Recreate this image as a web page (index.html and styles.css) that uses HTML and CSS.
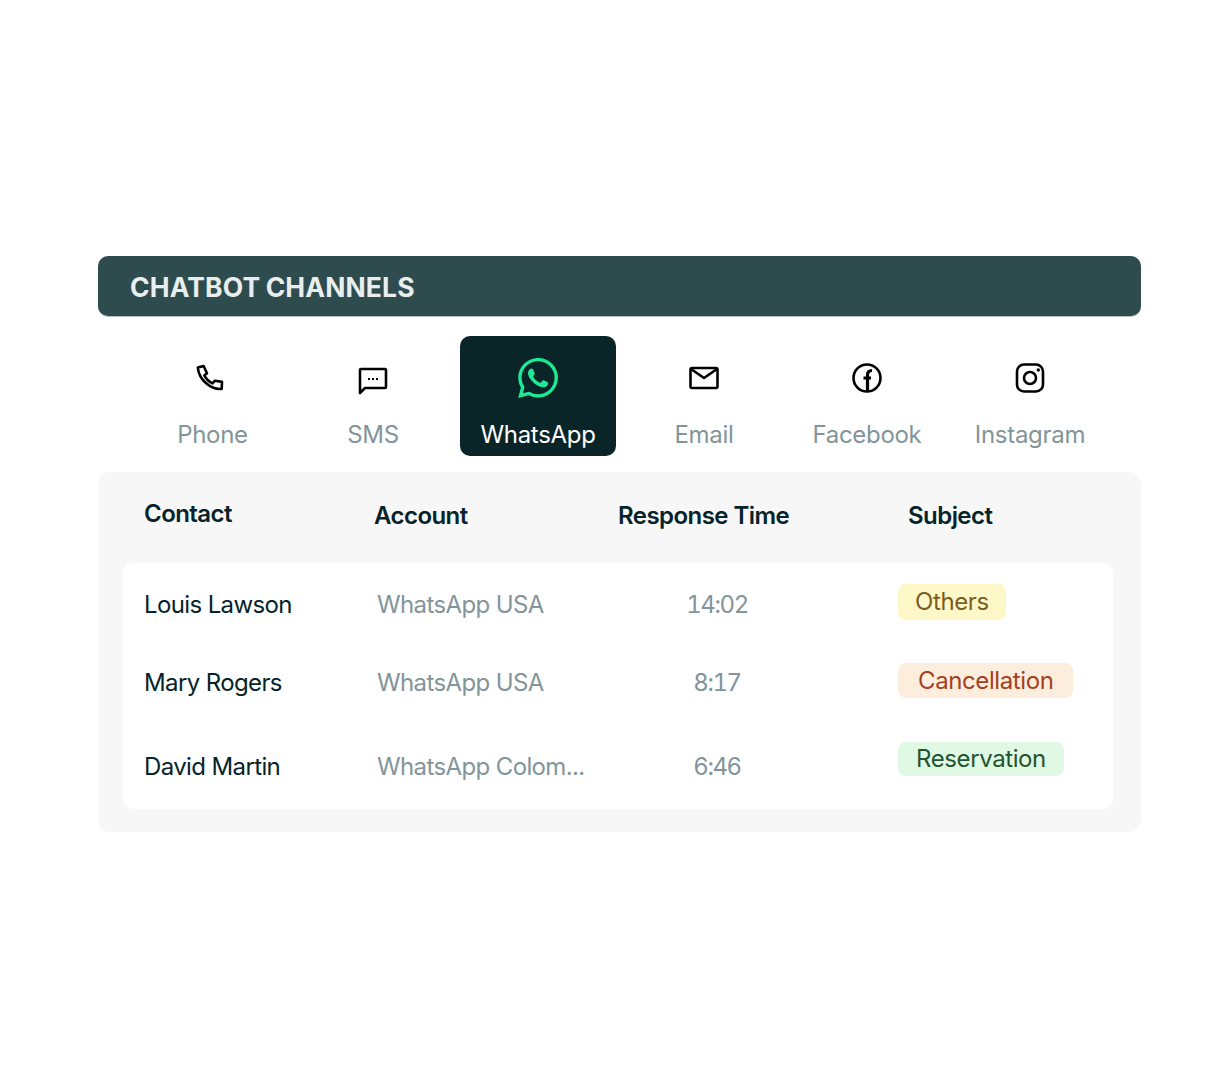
FILE: index.html
```html
<!DOCTYPE html>
<html lang="en">
<head>
    <meta charset="UTF-8">
    <title>Chatbot channels</title>
    <link rel="stylesheet" href="styles.css">
</head>
<body>
<main class="widget">
    <h1 class="banner">CHATBOT CHANNELS</h1>

    <nav class="channels">
        <div class="channel">
            <svg class="channel-icon" width="40" height="40" viewBox="0 0 40 40">
                <path class="line" d="M4.800 9.600 10.600 8l3.400 7.200-2.700 2.200c1.900 3.700 4.500 6.200 8.200 8l2.500-2.700 7 1.200-.3 7C18 32 6 22 4.800 9.600Z"/>
            </svg>
            <span>Phone</span>
        </div>
        <div class="channel">
            <svg class="channel-icon" width="40" height="40" viewBox="0 0 40 40">
                <path class="line" d="M7 35V12c0-.6.4-1 1-1h24c.6 0 1 .4 1 1v17c0 .6-.4 1-1 1H12l-5 5Z"/>
                <path class="dots" d="M15 21h2M19 21h2M23 21h2"/>
            </svg>
            <span>SMS</span>
        </div>
        <div class="channel channel-active">
            <svg class="channel-icon" width="40" height="40" viewBox="0 0 24 24">
                <path class="whatsapp" d="M17.472 14.382c-.297-.149-1.758-.867-2.03-.967-.273-.099-.471-.148-.67.15-.197.297-.767.966-.94 1.164-.173.199-.347.223-.644.075-.297-.15-1.255-.463-2.39-1.475-.883-.788-1.48-1.761-1.653-2.059-.173-.297-.018-.458.13-.606.134-.133.298-.347.446-.52.149-.174.198-.298.298-.497.099-.198.05-.371-.025-.52-.075-.149-.669-1.612-.916-2.207-.242-.579-.487-.5-.669-.51-.173-.008-.371-.01-.57-.01-.198 0-.52.074-.792.372-.272.297-1.04 1.016-1.04 2.479 0 1.462 1.065 2.875 1.213 3.074.149.198 2.096 3.2 5.077 4.487.709.306 1.262.489 1.694.625.712.227 1.36.195 1.871.118.571-.085 1.758-.719 2.006-1.413.248-.694.248-1.289.173-1.413-.074-.124-.272-.198-.57-.347m-5.421 7.403h-.004a9.87 9.87 0 01-5.031-1.378l-.361-.214-3.741.982.998-3.648-.235-.374a9.86 9.86 0 01-1.51-5.26c.001-5.45 4.436-9.884 9.888-9.884 2.64 0 5.122 1.03 6.988 2.898a9.825 9.825 0 012.893 6.994c-.003 5.45-4.437 9.884-9.885 9.884m8.413-18.297A11.815 11.815 0 0012.05 0C5.495 0 .16 5.335.157 11.892c0 2.096.547 4.142 1.588 5.945L.057 24l6.305-1.654a11.882 11.882 0 005.683 1.448h.005c6.554 0 11.89-5.335 11.893-11.893a11.821 11.821 0 00-3.48-8.413z"/>
            </svg>
            <span>WhatsApp</span>
        </div>
        <div class="channel">
            <svg class="channel-icon" width="40" height="40" viewBox="0 0 40 40">
                <rect class="line" x="6.500" y="10" width="27" height="20" rx="1.500"/>
                <path class="line" d="m7 11 13 9 13-9"/>
            </svg>
            <span>Email</span>
        </div>
        <div class="channel">
            <svg class="channel-icon" width="40" height="40" viewBox="0 0 40 40">
                <circle class="line" cx="20" cy="20" r="13.500"/>
                <path class="fb" d="M20.500 33V17c0-3 1.300-4.500 4.500-4.500M16.500 20h7.500"/>
            </svg>
            <span>Facebook</span>
        </div>
        <div class="channel">
            <svg class="channel-icon" width="40" height="40" viewBox="0 0 40 40">
                <rect class="line" x="7" y="6.500" width="26" height="27" rx="7"/>
                <circle class="line" cx="20" cy="20" r="6"/>
                <circle cx="28.300" cy="12" r="1.700"/>
            </svg>
            <span>Instagram</span>
        </div>
    </nav>

    <section class="table-panel">
        <div class="table-head">
            <div class="head-contact">Contact</div>
            <div>Account</div>
            <div>Response Time</div>
            <div>Subject</div>
        </div>
        <div class="table-card">
            <div class="row">
                <div class="cell cell-name">Louis Lawson</div>
                <div class="cell cell-muted">WhatsApp USA</div>
                <div class="cell cell-muted cell-time">14:02</div>
                <div><span class="badge badge-others">Others</span></div>
            </div>
            <div class="row">
                <div class="cell cell-name">Mary Rogers</div>
                <div class="cell cell-muted">WhatsApp USA</div>
                <div class="cell cell-muted cell-time">8:17</div>
                <div><span class="badge badge-cancel">Cancellation</span></div>
            </div>
            <div class="row row-last">
                <div class="cell cell-name">David Martin</div>
                <div class="cell cell-muted">WhatsApp Colom...</div>
                <div class="cell cell-muted cell-time">6:46</div>
                <div><span class="badge badge-reserve">Reservation</span></div>
            </div>
        </div>
    </section>
</main>
</body>
</html>
```

FILE: styles.css
```css
html, body {
    margin: 0;
    background: #fff;
    font-family: Inter, "Liberation Sans", sans-serif;
    color: #06232a;
}

.widget {
    width: 1043px;
    padding: 256px 0 256px 98px;
}

.banner {
    margin: 0;
    height: 60px;
    padding-left: 32px;
    border-radius: 10px;
    background: #2e4b4d;
    box-shadow: 0 1px 0 #b4c3c3;
    color: #e8eeee;
    font-size: 26.500px;
    font-weight: 700;
    letter-spacing: .13px;
    word-spacing: -1px;
    line-height: 62px;
}

.channels {
    display: grid;
    grid-template-columns: 147px 174px 156px 176px 150px 176px;
    height: 120px;
    margin: 20px 0 16px;
    padding-left: 41px;
}

.channel {
    display: flex;
    flex-direction: column;
    align-items: center;
    padding-top: 22px;
    border-radius: 10px;
    color: #82959a;
    font-size: 24px;
    letter-spacing: -.3px;
    line-height: 30px;
}

.channel-icon {
    display: block;
    margin-bottom: 22px;
}

.channel-active {
    background: #0a2528;
    color: #fff;
}

.line {
    fill: none;
    stroke: #000;
    stroke-width: 2.600;
    stroke-linejoin: round;
}

.dots {
    fill: none;
    stroke: #000;
    stroke-width: 2;
}

.fb {
    fill: none;
    stroke: #000;
    stroke-width: 3.200;
}

.whatsapp {
    fill: #1de894;
}

.table-panel {
    height: 360px;
    padding: 0 28px 0 25px;
    box-sizing: border-box;
    border-radius: 12px;
    background: #f7f7f7;
}

.table-head {
    display: grid;
    grid-template-columns: 230px 244px 290px auto;
    height: 91px;
    padding: 29px 0 0 21px;
    box-sizing: border-box;
    font-size: 24px;
    font-weight: 600;
    letter-spacing: -.55px;
    line-height: 30px;
}

.head-contact {
    margin-top: -2px;
}

.table-card {
    height: 246px;
    border-radius: 10px;
    background: #fff;
}

.row {
    display: grid;
    grid-template-columns: 233px 233px 288px auto;
    height: 79px;
    padding-left: 21px;
}

.row-last {
    height: 88px;
}

.cell {
    align-self: center;
    padding-top: 3px;
    font-size: 24px;
    letter-spacing: -.62px;
    line-height: 30px;
}

.row:first-child .cell {
    padding-top: 5px;
}

.cell-muted {
    color: #82959a;
}

.cell-time {
    padding-right: 74px;
    text-align: center;
    font-variant-numeric: tabular-nums;
    letter-spacing: -1.400px;
}

.badge {
    display: inline-block;
    margin-top: 21px;
    border-radius: 8px;
    font-size: 24px;
    letter-spacing: -.4px;
    line-height: 35px;
}

.badge-others {
    padding: 0 17px;
    background: #fef8c8;
    color: #7a5d1e;
    line-height: 36px;
}

.badge-cancel {
    padding: 0 20px;
    background: #fdeddc;
    color: #a33f22;
}

.badge-reserve {
    padding: 0 18px;
    background: #e0f9e4;
    color: #24542f;
    line-height: 34px;
}
```
